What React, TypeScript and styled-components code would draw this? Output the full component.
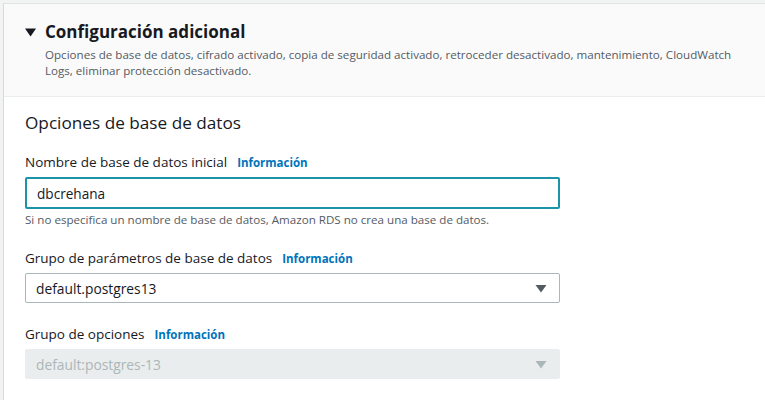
import React from "react";
import styled, { createGlobalStyle } from "styled-components";

const Global = createGlobalStyle`
  html, body { margin: 0; padding: 0; background: #f2f3f3; }
  body { font-family: "Open Sans", "Noto Sans", sans-serif; color: #16191f; }
`;

const Page = styled.div`
  width: 765px;
  height: 400px;
  overflow: hidden;
  padding: 3px 0 0 3px;
  box-sizing: border-box;
`;

const Panel = styled.section`
  background: #ffffff;
  border-top: 1px solid #e1e4e4;
  border-left: 1px solid #d5dbdb;
  height: 100%;
`;

const Header = styled.div`
  background: #fafafa;
  border-bottom: 1px solid #eaeded;
  padding: 14px 20px 17px 21px;
  display: flex;
  gap: 9px;
`;

const Caret = styled.svg`
  width: 11px;
  height: 9px;
  margin-top: 10px;
  flex: none;
`;

const HeaderText = styled.div`
  display: flex;
  flex-direction: column;
`;

const Title = styled.h2`
  margin: 0;
  font-size: 17px;
  font-weight: 700;
  line-height: 28px;
  color: #16191f;
`;

const Desc = styled.p`
  margin: 1px 0 0;
  width: 700px;
  font-size: 11.6px;
  line-height: 16px;
  color: #545b64;
`;

const Body = styled.div`
  padding: 14px 20px 0 21px;
  display: flex;
  flex-direction: column;
  width: 535px;
`;

const SectionTitle = styled.h3`
  margin: 0 0 17px;
  font-size: 17.2px;
  font-weight: 400;
  line-height: 24px;
`;

const Field = styled.div<{ gap: number }>`
  display: flex;
  flex-direction: column;
  margin-bottom: ${(p) => p.gap}px;
`;

const LabelRow = styled.div`
  display: flex;
  align-items: baseline;
  gap: 10px;
  font-size: 13.5px;
  line-height: 20px;
  margin-bottom: 4px;
`;

const Info = styled.a`
  font-size: 11.5px;
  font-weight: 700;
  color: #0073bb;
  text-decoration: none;
`;

const Input = styled.div`
  height: 32px;
  box-sizing: border-box;
  border: 2px solid #1b94a9;
  border-radius: 2px;
  padding: 0 10px;
  display: flex;
  align-items: center;
  font-size: 13.6px;
`;

const Hint = styled.div`
  font-size: 11.6px;
  line-height: 16px;
  color: #545b64;
  margin-top: 3px;
`;

const Select = styled.div<{ disabled?: boolean }>`
  height: 30px;
  box-sizing: border-box;
  border: 1px solid ${(p) => (p.disabled ? "#eaeded" : "#aab7b8")};
  background: ${(p) => (p.disabled ? "#eaeded" : "#ffffff")};
  color: ${(p) => (p.disabled ? "#aab7b8" : "#16191f")};
  border-radius: 2px;
  padding: 0 12px 0 10px;
  display: flex;
  align-items: center;
  justify-content: space-between;
  font-size: 13.8px;
`;

const Arrow = ({ color }: { color: string }) => (
  <svg width="12" height="9" viewBox="0 0 12 9">
    <path d="M0.5 1 L11.5 1 L6 8.5 Z" fill={color} />
  </svg>
);

export default function App() {
  return (
    <>
      <Global />
      <Page>
        <Panel>
          <Header>
            <Caret viewBox="0 0 11 9">
              <path d="M0 0.5 L11 0.5 L5.5 8.5 Z" fill="#16191f" />
            </Caret>
            <HeaderText>
              <Title>Configuración adicional</Title>
              <Desc>
                Opciones de base de datos, cifrado activado, copia de seguridad activado, retroceder desactivado,
                mantenimiento, CloudWatch Logs, eliminar protección desactivado.
              </Desc>
            </HeaderText>
          </Header>
          <Body>
            <SectionTitle>Opciones de base de datos</SectionTitle>
            <Field gap={20}>
              <LabelRow>
                <span>Nombre de base de datos inicial</span>
                <Info>Información</Info>
              </LabelRow>
              <Input>dbcrehana</Input>
              <Hint>Si no especifica un nombre de base de datos, Amazon RDS no crea una base de datos.</Hint>
            </Field>
            <Field gap={21}>
              <LabelRow>
                <span>Grupo de parámetros de base de datos</span>
                <Info>Información</Info>
              </LabelRow>
              <Select>
                default.postgres13
                <Arrow color="#545b64" />
              </Select>
            </Field>
            <Field gap={0}>
              <LabelRow>
                <span>Grupo de opciones</span>
                <Info>Información</Info>
              </LabelRow>
              <Select disabled>
                default:postgres-13
                <Arrow color="#aab7b8" />
              </Select>
            </Field>
          </Body>
        </Panel>
      </Page>
    </>
  );
}
